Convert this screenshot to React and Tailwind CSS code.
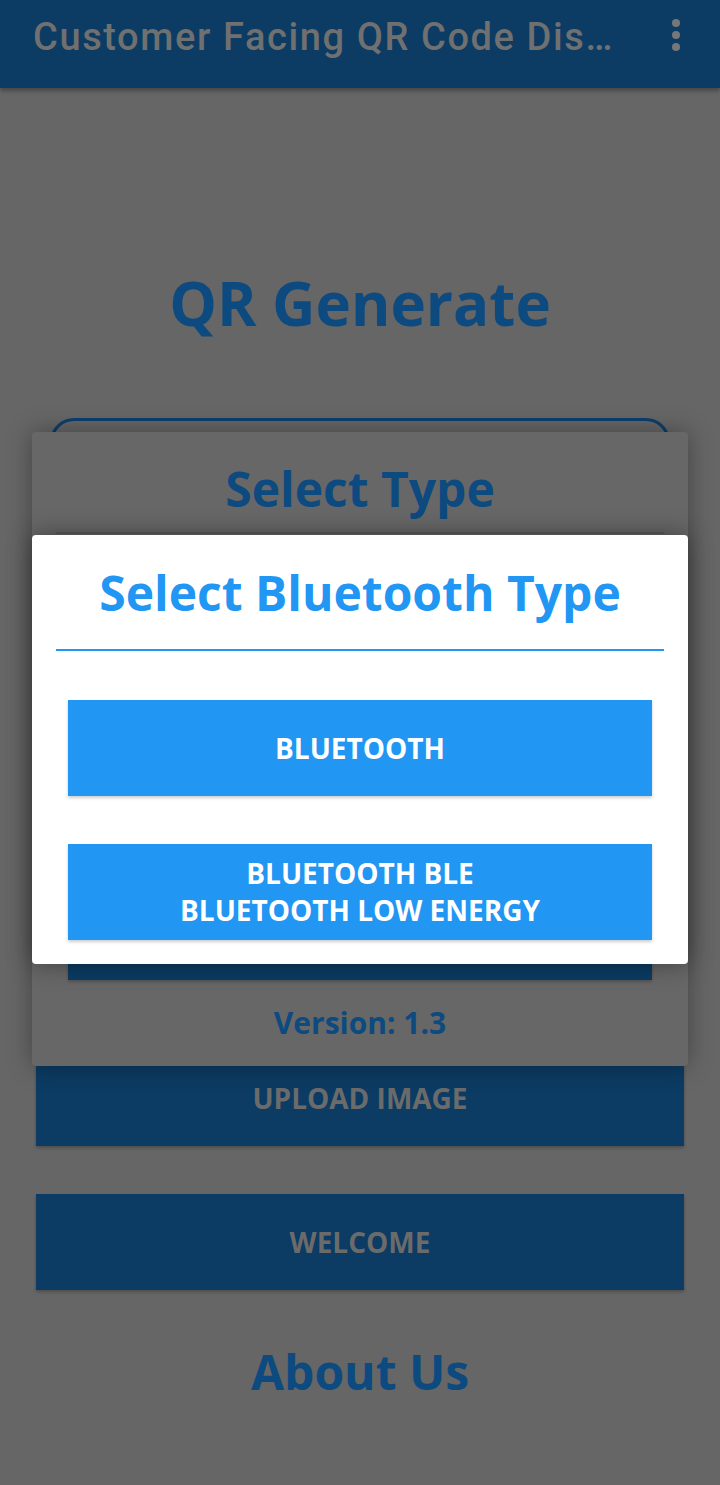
import React from "react";

const os = { fontFamily: '"Open Sans", "Noto Sans", sans-serif' };
const rb = { fontFamily: 'Roboto, "Noto Sans", sans-serif' };

function PageButton({ children, className = "" }) {
  return (
    <div
      className={`w-[648px] h-[96px] bg-[#0c3b63] flex items-center justify-center text-[28px] font-bold text-[#6b6b6b] shadow-[0_2px_3px_rgba(0,0,0,0.25)] ${className}`}
    >
      {children}
    </div>
  );
}

function DialogButton({ children, dark = false }) {
  return (
    <div
      className={`w-[584px] h-[96px] flex flex-col items-center justify-center text-[28px] leading-[37px] font-bold text-center shadow-[0_2px_3px_rgba(0,0,0,0.2)] ${
        dark ? "bg-[#0c3b63] text-[#6b6b6b]" : "bg-[#2196f3] text-white"
      }`}
    >
      {children}
    </div>
  );
}

export default function App() {
  return (
    <div className="relative w-[720px] h-[1485px] overflow-hidden bg-[#666666]" style={os}>
      {/* App bar */}
      <header className="h-[88px] bg-[#0c3c64] flex items-center justify-between pl-[33px] pr-[40px] shadow-[0_3px_4px_rgba(0,0,0,0.3)] relative z-10">
        <div
          className="w-[594px] truncate text-[38px] tracking-[1.6px] font-medium text-[#707070] leading-[46px] pb-[14px]"
          style={rb}
        >
          Customer Facing QR Code Display
        </div>
        <div className="flex flex-col gap-[4px] pb-[18px]">
          <span className="w-[8px] h-[8px] rounded-full bg-[#777777]" />
          <span className="w-[8px] h-[8px] rounded-full bg-[#777777]" />
          <span className="w-[8px] h-[8px] rounded-full bg-[#777777]" />
        </div>
      </header>

      {/* Page content */}
      <main className="flex flex-col items-center">
        <h1 className="mt-[177px] text-[60px] leading-[76px] font-bold text-[#0d4a80]">QR Generate</h1>
        <div className="mt-[77px] w-[620px] h-[560px] rounded-[24px] border-[3px] border-[#0c3f6c]" />
        <PageButton className="mt-[72px]">UPLOAD IMAGE</PageButton>
        <PageButton className="mt-[48px]">WELCOME</PageButton>
        <h2 className="mt-[50px] text-[48px] leading-[64px] font-bold text-[#0d4a80]">About Us</h2>
      </main>

      {/* First dialog (dimmed) */}
      <div className="absolute left-[32px] top-[432px] w-[656px] h-[634px] bg-[#676767] rounded-[4px] shadow-[0_0_24px_rgba(0,0,0,0.35)] flex flex-col items-center">
        <div className="h-[100px] w-full flex items-center justify-center text-[48px] font-bold text-[#0d4a80] pt-[14px]">
          Select Type
        </div>
        <div className="w-[608px] h-[2px] bg-[#5a5a5a]" />
        <div className="mt-[62px] flex flex-col gap-[48px]">
          <DialogButton dark>QR CODE</DialogButton>
          <DialogButton dark>BLUETOOTH</DialogButton>
          <DialogButton dark>WIFI</DialogButton>
        </div>
        <div className="mt-[23px] text-[30px] leading-[40px] font-bold text-[#0d4a80]">Version: 1.3</div>
      </div>

      {/* Second dialog */}
      <div className="absolute left-[32px] top-[535px] w-[656px] h-[429px] bg-white rounded-[4px] shadow-[0_0_24px_rgba(0,0,0,0.4)] flex flex-col items-center">
        <div className="h-[114px] w-full flex items-center justify-center text-[48px] font-bold text-[#2196f3] pt-[2px]">
          Select Bluetooth Type
        </div>
        <div className="w-[608px] h-[2px] bg-[#2196f3]" />
        <div className="mt-[49px] flex flex-col gap-[48px]">
          <DialogButton>BLUETOOTH</DialogButton>
          <DialogButton>
            <span>BLUETOOTH BLE</span>
            <span>BLUETOOTH LOW ENERGY</span>
          </DialogButton>
        </div>
      </div>
    </div>
  );
}
